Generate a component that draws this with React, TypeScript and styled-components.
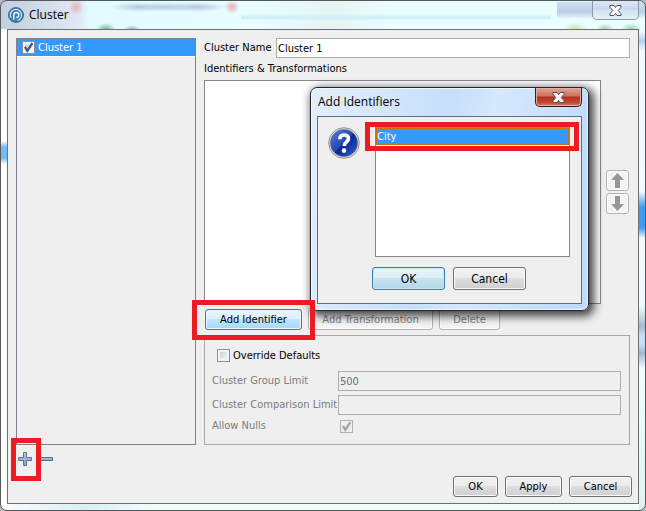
import React from "react";
import styled, { createGlobalStyle, css } from "styled-components";

const UI_FONT = '"DejaVu Sans Condensed", "Noto Sans", sans-serif';
const TITLE_FONT = '"Open Sans", "Noto Sans", sans-serif';
const RED = "#ed1c24";

const GlobalStyle = createGlobalStyle`
  * { box-sizing: border-box; }
  body { margin: 0; background: #b4bcc0; font: 11px/14px ${UI_FONT}; color: #000; }
  button, input { font: inherit; color: inherit; margin: 0; }
`;

const Window = styled.main`
  position: relative;
  display: flex;
  flex-direction: column;
  min-height: 100vh;
  padding: 0 6px 6px;
  border: 1px solid #56585a;
  border-radius: 7px;
  background:
    radial-gradient(ellipse 8px 8px at 75px 6px, #e6b4bc, transparent),
    radial-gradient(ellipse 8px 7px at 231px 6px, #e8b0b8, transparent),
    radial-gradient(ellipse 10px 7px at 105px 29px, #62b272, transparent),
    radial-gradient(ellipse 9px 5px at 131px 29px, #8fa6d8, transparent),
    radial-gradient(ellipse 26px 5px at 137px 6px, #b3c6e2, transparent),
    radial-gradient(ellipse 30px 5px at 165px 6px, #b8cbe6, transparent),
    radial-gradient(ellipse 30px 5px at 196px 6px, #b3c6e2, transparent),
    linear-gradient(transparent, #cdeefa 50%, transparent) 240px 13px / 310px 7px no-repeat,
    radial-gradient(ellipse 12px 7px at 574px 28px, #d3dfa5, transparent),
    radial-gradient(ellipse 9px 6px at 604px 28px, #a8cfb0, transparent),
    radial-gradient(ellipse 10px 6px at 630px 28px, #9fceaa, transparent),
    linear-gradient(#d0e2f5, #b9cde6 60%, #e0f2fb) 556px 1px / 90px 16px no-repeat,
    linear-gradient(90deg, #c3cfdf, #dfe8f2 78px, #e2fbff 88px, #e8fdff 260px, #e6f4f3 330px, #e9ffff 400px, #e9ffff) 0 0 / 100% 28px no-repeat,
    linear-gradient(#e9ffff 0, #f5fafd 30px, #b5d2f2 40px, #edfaff 50px, #f0fbff 190px, #3d9cf3 206px, #3d9cf3 227px, #f4f8fd 237px, #eefbff 305px, #a3bbd1 325px, #c8e0f5 335px, #c8e0f5 342px, #a0bad2 352px, #effdff 368px, #e0f1ee 100%) right 0 / 6px 100% no-repeat,
    linear-gradient(#fff 0, #fff 140px, #71bbf8 146px, #71bbf8 157px, #fff 163px, #fff 100%) left 0 / 6px 100% no-repeat,
    linear-gradient(90deg, #fafdfe, #d8eff4 85px, #effdfd 150px, #effdfd);
`;

const TitleBar = styled.header`
  display: flex;
  align-items: center;
  gap: 5px;
  height: 28px;
  padding-left: 1px;
  font: 12px/16px ${TITLE_FONT};

  h1 { margin: 0; font: inherit; flex: 1; }
`;

const CloseButton = styled.button<{ $danger?: boolean }>`
  display: grid;
  place-items: center;
  align-self: flex-start;
  width: 47px;
  height: 19px;
  padding: 0;
  border: 1px solid #8a9bac;
  border-top: 0;
  border-radius: 0 0 5px 5px;
  background: linear-gradient(#dce8f5, #c8d8e9 50%, #d3e2f0 50%, #e2f3f8);
  ${(p) =>
    p.$danger &&
    css`
      border-color: #43191a;
      box-shadow: inset 0 0 0 1px #e5aaa0;
      background: linear-gradient(#e3a597, #cd6f5d 45%, #b32f1c 50%, #c14835 80%, #d97e69);
    `}
`;

const Client = styled.div`
  flex: 1;
  display: flex;
  flex-direction: column;
  border: 1px solid #6c7073;
  background: #efefef;
`;

const Panels = styled.div`
  flex: 1;
  display: flex;
  gap: 8px;
  padding: 8px 8px 0;
`;

const Sidebar = styled.section`
  flex: 0 0 180px;
  display: flex;
  flex-direction: column;
`;

const ClusterList = styled.div`
  flex: 1;
  border: 1px solid #7d818b;
`;

const ClusterItem = styled.label`
  display: flex;
  align-items: center;
  gap: 3px;
  height: 18px;
  padding-left: 5px;
  border-bottom: 1px solid #fff;
  background: #3399ff;
  color: #fff;
`;

const Check = styled.input`
  appearance: none;
  flex: none;
  width: 13px;
  height: 13px;
  border: 1px solid #8e8f8f;
  background: linear-gradient(135deg, #cbcfd5, #f6f6f6) content-box, #f4f4f4;
  padding: 2px;
  &:checked {
    background:
      url("data:image/svg+xml,%3Csvg xmlns='http://www.w3.org/2000/svg' viewBox='0 0 11 11'%3E%3Cpath d='M2.5 5l2 3.3L8.8 1.8' fill='none' stroke='%2339568f' stroke-width='1.9'/%3E%3C/svg%3E") border-box,
      linear-gradient(135deg, #cbcfd5, #f6f6f6) content-box, #f4f4f4;
  }
  &:disabled {
    border-color: #b1b1b1;
    background:
      url("data:image/svg+xml,%3Csvg xmlns='http://www.w3.org/2000/svg' viewBox='0 0 11 11'%3E%3Cpath d='M2.5 5l2 3.3L8.8 1.8' fill='none' stroke='%23a3a3a3' stroke-width='1.9'/%3E%3C/svg%3E") border-box, #f0f0f0;
  }
`;

const ListTools = styled.div`
  display: flex;
  gap: 6px;
  height: 29px;
  padding: 7px 0 0 2px;
`;

const IconButton = styled.button`
  display: block;
  width: 15px;
  height: 15px;
  padding: 0;
  border: 0;
  background: none;
  svg { display: block; }
`;

const Marked = styled.div<{ $inset: string }>`
  position: relative;
  &::after {
    content: "";
    position: absolute;
    z-index: 3;
    inset: ${(p) => p.$inset};
    border: 5px solid ${RED};
    pointer-events: none;
  }
`;

const Details = styled.section`
  flex: 1;
  min-width: 0;
  display: flex;
  flex-direction: column;
  padding-bottom: 29px;
`;

const NameRow = styled.div`
  display: flex;
  align-items: center;
  label { flex: 0 0 72px; }
`;

const TextField = styled.input`
  flex: 1;
  min-width: 0;
  height: 20px;
  padding: 0 1px;
  border: 1px solid #abadb3;
  background: #fff;
  &:disabled { background: #efefef; color: #6d6d6d; }
`;

const SectionTitle = styled.h2`
  margin: 0;
  padding: 4px 0;
  font: inherit;
`;

const OrderRow = styled.div`
  flex: 1;
  display: flex;
  align-items: center;
  gap: 5px;
`;

const IdentifierBox = styled.div`
  flex: 1;
  align-self: stretch;
  border: 1px solid #828790;
  background: #fff;
`;

const Arrows = styled.div`
  display: grid;
  gap: 2px;
  padding-right: 1px;
`;

const Button = styled.button<{ $width: number; $tone?: "hot" | "default"; $tall?: boolean }>`
  width: ${(p) => p.$width}px;
  height: ${(p) => (p.$tall ? 23 : 21)}px;
  padding: 0;
  border: 1px solid #707070;
  border-radius: 3px;
  box-shadow: inset 0 0 0 1px #fafafa;
  background: linear-gradient(#f2f2f2, #ebebeb 50%, #dddddd 50%, #cfcfcf);
  white-space: nowrap;
  ${(p) => p.$tall && "font-size: 12px;"}
  ${(p) =>
    p.$tone &&
    css`
      border-color: #3c7fb1;
      box-shadow: inset 0 0 0 1px ${p.$tone === "hot" ? "#e4f6fe" : "#c4e8f8"};
      background: ${p.$tone === "hot"
        ? "linear-gradient(#eaf6fd, #d9f0fc 50%, #bee6fd 50%, #a7d9f5)"
        : "linear-gradient(#e9f4f9, #dceef6 50%, #c5e2f0 50%, #b2d8ea)"};
    `}
  &:disabled {
    border-color: #adb2b5;
    box-shadow: inset 0 0 0 1px #fcfcfc;
    background: #f4f4f4;
    color: #838383;
  }
`;

const ArrowButton = styled(Button)`
  display: grid;
  place-items: center;
`;

const Actions = styled.div`
  display: flex;
  gap: 6px;
  padding: 5px 1px;
`;

const Defaults = styled.div`
  height: 110px;
  padding: 12px 8px 10px 7px;
  border: 1px solid #a5a7aa;
`;

const Override = styled.label`
  display: flex;
  align-items: center;
  gap: 3px;
  height: 15px;
  margin-bottom: 8px;
  padding-left: 5px;
`;

const Grid = styled.div`
  display: grid;
  grid-template-columns: 122px 1fr;
  column-gap: 4px;
  row-gap: 4px;
  align-items: center;
  color: #7b7b7b;
  white-space: nowrap;
  input[type="checkbox"] { margin-left: 2px; }
`;

const Footer = styled.footer`
  display: flex;
  justify-content: flex-end;
  gap: 7px;
  padding: 2px 6px 6px;
`;

const Dialog = styled.section`
  position: absolute;
  z-index: 2;
  top: 86px;
  left: 309px;
  width: 279px;
  padding: 0 6px 6px;
  border: 1px solid #22262b;
  border-radius: 7px;
  background: linear-gradient(100deg, #e4effb, #c6dffa 45%, #d6e8fc 60%, #c0dcfa 90%);
  box-shadow: inset 0 0 0 1px #eef7ff, 3px 3px 10px 2px rgba(0, 0, 0, 0.75);
`;

const DialogClient = styled.div`
  display: grid;
  grid-template-columns: 32px 1fr;
  gap: 10px 15px;
  padding: 10px 11px 13px 10px;
  border: 1px solid #5d7186;
  background: #efefef;
`;

const Choices = styled.div`
  height: 130px;
  border: 1px solid #828790;
  background: #fff;
`;

const Choice = styled.button`
  display: block;
  width: 100%;
  height: 17px;
  padding: 0;
  border: 1px dotted #cc6600;
  background: #3399ff;
  color: #fff;
  line-height: 14px;
  text-align: left;
`;

const DialogActions = styled.div`
  grid-column: 1 / -1;
  display: flex;
  justify-content: center;
  gap: 8px;
`;

const CloseGlyph = () => (
  <svg width="13" height="11" viewBox="0 0 13 11">
    <path
      d="M1 .5h4l1.500 2L8 .5h4v1.800L9.200 5.500 12 8.700v1.800H8l-1.500-2-1.500 2H1V8.700l2.800-3.200L1 2.300z"
      fill="#fff"
      stroke="#4b5263"
    />
  </svg>
);

const AppLogo = () => (
  <svg width="16" height="16" viewBox="0 0 16 16">
    <circle cx="8" cy="8" r="7.500" fill="#347db5" stroke="#3b6f9c" />
    <path d="M5.800 12.800V8a2.500 2.500 0 1 1 2.500 2.500" fill="none" stroke="#fff" strokeWidth="1.400" />
    <path d="M3.200 11A5.600 5.600 0 1 1 9.500 13.400" fill="none" stroke="#d8eaf6" strokeWidth="1.200" />
  </svg>
);

const Arrow = ({ down }: { down?: boolean }) => (
  <svg width="13" height="15" viewBox="0 0 13 15">
    <path
      d={down ? "M4 0h5v8h4l-6.500 7L0 8h4z" : "M4 15h5V7h4L6.500 0 0 7h4z"}
      fill="#969696"
    />
  </svg>
);

const Question = () => (
  <svg width="32" height="32" viewBox="0 0 32 32">
    <defs>
      <linearGradient id="ball" x1="0" y1="0" x2="1" y2="1">
        <stop offset="0" stopColor="#5d7fd6" />
        <stop offset=".48" stopColor="#2447b4" />
        <stop offset=".52" stopColor="#0d2790" />
        <stop offset="1" stopColor="#2f62d8" />
      </linearGradient>
    </defs>
    <circle cx="16" cy="16" r="15.300" fill="#e8e8e8" stroke="#8f8f8f" />
    <circle cx="16" cy="16" r="13.600" fill="url(#ball)" stroke="#4a5a94" strokeWidth=".6" />
    <path
      d="M11.800 12.200c.1-3 2-4.200 4.300-4.200 2.600 0 4.400 1.400 4.400 3.700 0 3.400-4.200 3.200-4.200 7.300"
      fill="none"
      stroke="#fff"
      strokeWidth="3.600"
    />
    <circle cx="16" cy="23.600" r="2.300" fill="#fff" />
  </svg>
);

const ToolGlyph = ({ d }: { d: string }) => (
  <svg width="15" height="15" viewBox="0 0 15 15">
    <defs>
      <linearGradient id="tool" x1="0" y1="0" x2="0" y2="1">
        <stop offset="0" stopColor="#bccbdd" />
        <stop offset="1" stopColor="#839fbd" />
      </linearGradient>
    </defs>
    <path d={d} fill="url(#tool)" stroke="#59738f" />
  </svg>
);

export default function App() {
  return (
    <>
      <GlobalStyle />
      <Window>
        <TitleBar>
          <AppLogo />
          <h1>Cluster</h1>
          <CloseButton aria-label="Close window"><CloseGlyph /></CloseButton>
        </TitleBar>
        <Client>
          <Panels>
            <Sidebar>
              <ClusterList>
                <ClusterItem>
                  <Check type="checkbox" defaultChecked />
                  Cluster 1
                </ClusterItem>
              </ClusterList>
              <ListTools>
                <Marked $inset="-14px -8px -7px -7px">
                  <IconButton aria-label="Add cluster">
                    <ToolGlyph d="M5.500.500h3v5h5v3h-5v5h-3v-5h-5v-3h5z" />
                  </IconButton>
                </Marked>
                <IconButton aria-label="Remove cluster">
                  <ToolGlyph d="M.500 5.500h13v3h-13z" />
                </IconButton>
              </ListTools>
            </Sidebar>
            <Details>
              <NameRow>
                <label htmlFor="name">Cluster Name</label>
                <TextField id="name" defaultValue="Cluster 1" />
              </NameRow>
              <SectionTitle>Identifiers &amp; Transformations</SectionTitle>
              <OrderRow>
                <IdentifierBox />
                <Arrows>
                  <ArrowButton $width={23} disabled aria-label="Move up"><Arrow /></ArrowButton>
                  <ArrowButton $width={23} disabled aria-label="Move down"><Arrow down /></ArrowButton>
                </Arrows>
              </OrderRow>
              <Actions>
                <Marked $inset="-9px -13px -10px -13px">
                  <Button $width={97} $tone="hot">Add Identifier</Button>
                </Marked>
                <Button $width={125} disabled>Add Transformation</Button>
                <Button $width={61} disabled>Delete</Button>
              </Actions>
              <Defaults>
                <Override>
                  <Check type="checkbox" />
                  Override Defaults
                </Override>
                <Grid>
                  <label htmlFor="group">Cluster Group Limit</label>
                  <TextField id="group" defaultValue="500" disabled />
                  <label htmlFor="comparison">Cluster Comparison Limit</label>
                  <TextField id="comparison" disabled />
                  <label htmlFor="nulls">Allow Nulls</label>
                  <Check id="nulls" type="checkbox" defaultChecked disabled />
                </Grid>
              </Defaults>
            </Details>
          </Panels>
          <Footer>
            <Button $width={45}>OK</Button>
            <Button $width={57}>Apply</Button>
            <Button $width={63}>Cancel</Button>
          </Footer>
        </Client>
        <Dialog role="dialog" aria-label="Add Identifiers">
          <TitleBar>
            <h1>Add Identifiers</h1>
            <CloseButton $danger aria-label="Close dialog"><CloseGlyph /></CloseButton>
          </TitleBar>
          <DialogClient>
            <Question />
            <Choices>
              <Marked $inset="-6px -10px -6px -11px">
                <Choice>City</Choice>
              </Marked>
            </Choices>
            <DialogActions>
              <Button $width={73} $tall $tone="default">OK</Button>
              <Button $width={73} $tall>Cancel</Button>
            </DialogActions>
          </DialogClient>
        </Dialog>
      </Window>
    </>
  );
}
